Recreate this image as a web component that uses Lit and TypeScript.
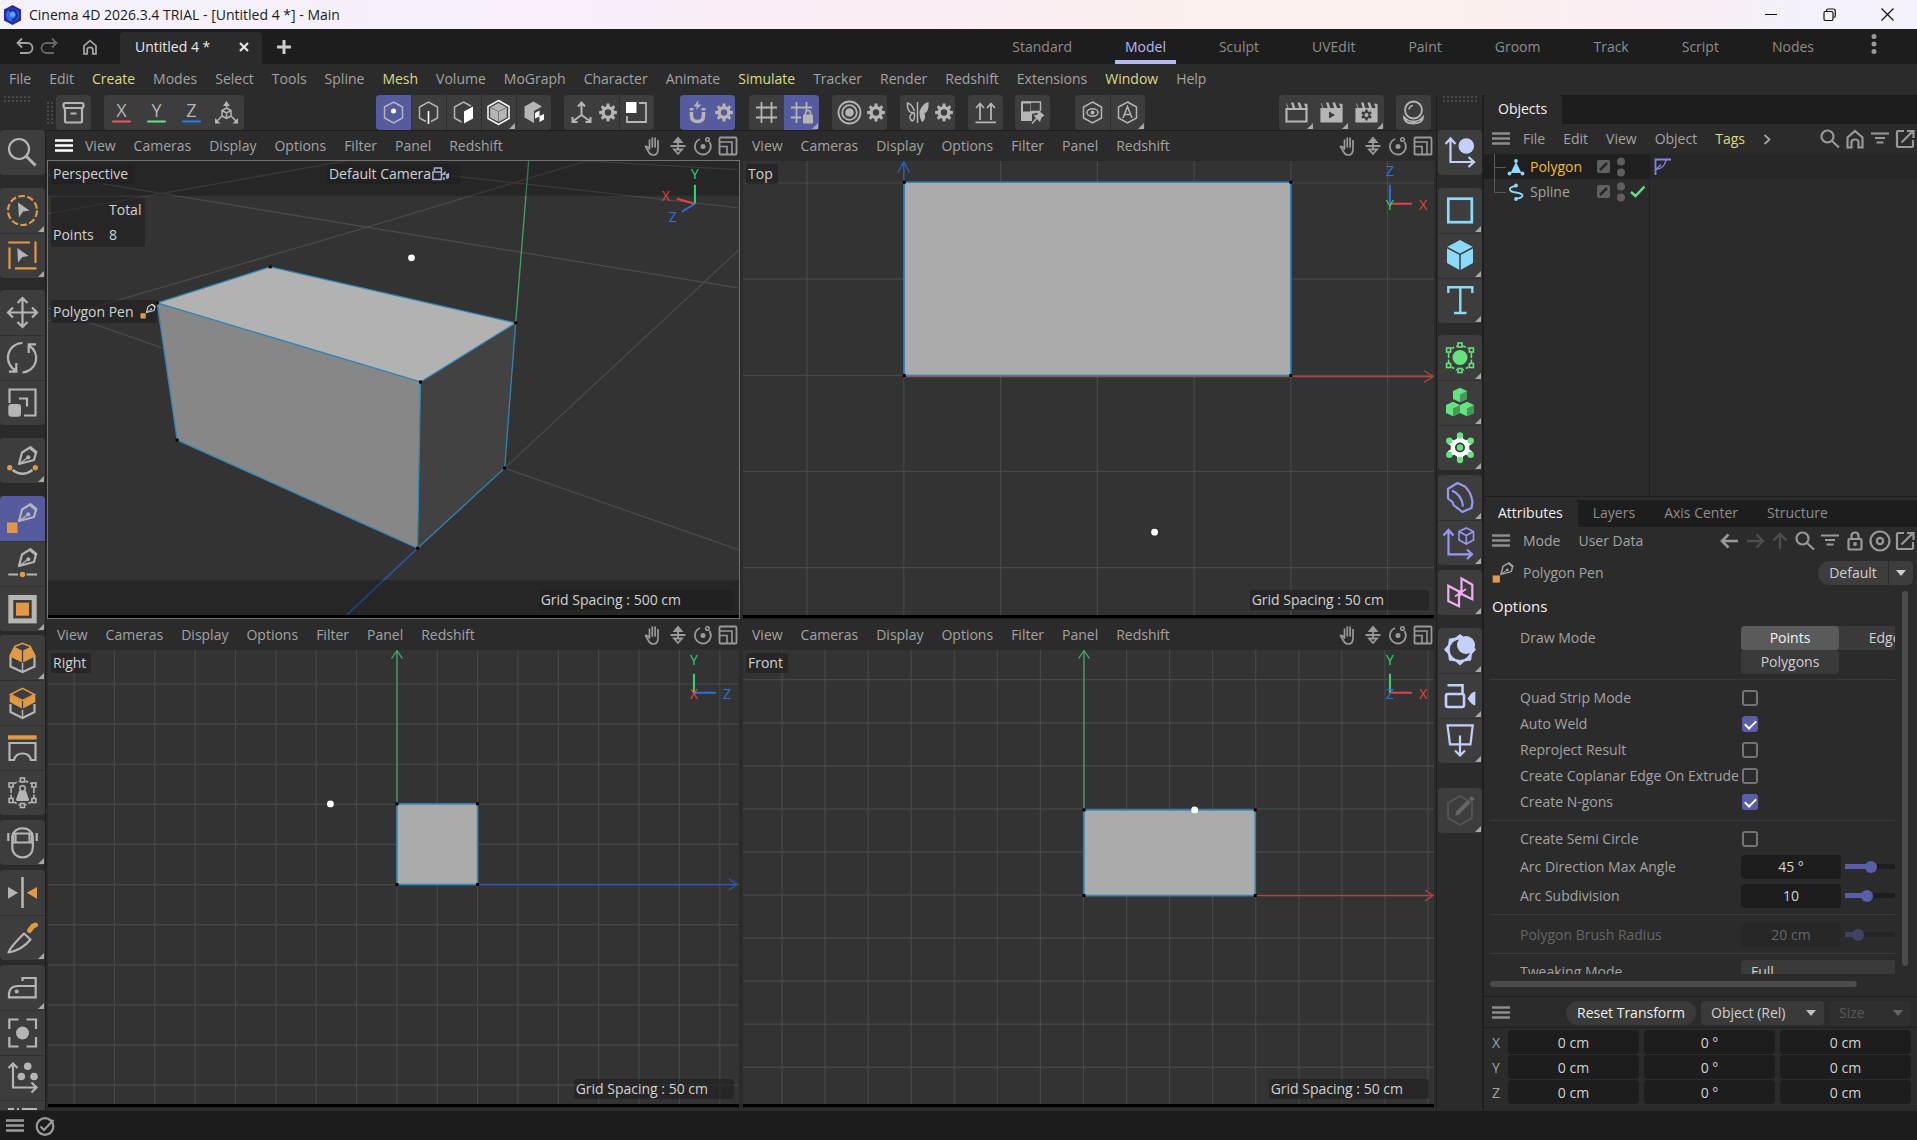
import { LitElement, html, svg, css, nothing } from "lit";
import type { TemplateResult, SVGTemplateResult } from "lit";
import { customElement, property, state } from "lit/decorators.js";
import { classMap } from "lit/directives/class-map.js";

type Icon = SVGTemplateResult;

/* ---------- icon helpers ---------- */

const icon = (size: number, body: Icon): TemplateResult =>
  html`<svg class="icon" width=${size} height=${size} viewBox="0 0 ${size} ${size}" aria-hidden="true">${body}</svg>`;

const gearPath = (cx: number, cy: number, r: number, teeth: number, hole: number): string => {
  const pts: string[] = [];
  const step = (Math.PI * 2) / teeth;
  for (let i = 0; i < teeth; i++) {
    const a = i * step - Math.PI / 2;
    for (const [o, k] of [[-0.33, 0.72], [-0.2, 1], [0.2, 1], [0.33, 0.72]]) {
      pts.push(`${(cx + Math.cos(a + o * step) * r * k).toFixed(2)} ${(cy + Math.sin(a + o * step) * r * k).toFixed(2)}`);
    }
  }
  return `M${pts.join("L")}ZM${cx - hole} ${cy}a${hole} ${hole} 0 1 0 ${hole * 2} 0a${hole} ${hole} 0 1 0 ${-hole * 2} 0Z`;
};

const gear = (cx: number, cy: number, r: number, teeth = 6, hole = r * 0.36): Icon =>
  svg`<path class="f" fill-rule="evenodd" d=${gearPath(cx, cy, r, teeth, hole)}/>`;

const nib = (dy: number): Icon => svg`<g transform="translate(0 ${dy})">
  <path d="M19 26L22 14.500L30 9.500L36 14.500L34 22Z" stroke-linejoin="round"/>
  <path d="M29.500 9L36.800 15" stroke-width="3"/>
  <path d="M19 26L28 19.500" stroke-width="1.500"/><circle class="f" cx="28.300" cy="19.300" r="2"/></g>`;

const nodes = (x: number): Icon => svg`
  <g stroke-width="1.600">${[[0, -12.5], [-11.4, -7.5], [11.4, -7.5], [-11.4, 8], [11.4, 8], [0, 13]].map(
    ([dx, dy]) => svg`<rect x=${x + dx - 2} y=${22.5 + dy - 2} width="4" height="4"/>`)}
  <path stroke-dasharray="3 2" d="M${x - 8.5} 13.500L${x - 3} 11M${x + 3} 11L${x + 8.5} 13.500M${x - 8.5} 32L${x - 3} 35M${x + 8.5} 32L${x + 3} 35"/>
  <path stroke-dasharray="5 1.500" d="M${x - 11.4} 18V28M${x + 11.4} 18V28"/></g>`;

const isoCube = (x: number, y: number): Icon => svg`
  <path class="f" d="M${x} ${y - 7.3}L${x + 7} ${y - 4}V${y + 4}L${x} ${y + 7.3}L${x - 7} ${y + 4}V${y - 4}Z"/>
  <path fill="#469857" stroke="none" d="M${x} ${y - 0.5}L${x + 7} ${y - 4}V${y + 4}L${x} ${y + 7.3}Z"/>`;

/* ---------- left palette (45 × 45) ---------- */

const I = {
  search: svg`<circle cx="19" cy="19" r="10"/><path d="M26.500 26.500L35.500 35.500" stroke-width="3"/>`,
  live: svg`<circle class="o" cx="22.500" cy="22.500" r="14.500" stroke-dasharray="6.600 2.500"/><path class="f" d="M18 14.500L29.500 22.500L23 23.500L19 29.500Z"/>`,
  rectSel: svg`<path class="o" d="M8.300 9.500H30M35.500 8.500V30M9.500 14.500V36M15 35.300H36.500"/><path class="f" d="M17.300 15L28.500 23L22.500 24L18 29.500Z"/>`,
  move: svg`<path d="M22.500 8V37M8 22.500H37M17.500 13L22.500 8L27.500 13M17.500 32L22.500 37L27.500 32M13 17.500L8 22.500L13 27.500M32 17.500L37 22.500L32 27.500"/>`,
  rotate: svg`<path d="M22.500 8A14.500 14.500 0 0 0 16 35.500M22.500 37.500A14.500 14.500 0 0 0 29 10.500M9 36.700H16.300V28M36 9.300H28.700V18"/>`,
  scale: svg`<path d="M9.500 23V9.500H35.500V35.500H24M19 18.500H27V26.500"/><rect class="f" x="8.300" y="24" width="12.700" height="12.700" rx="3"/>`,
  splinePen: svg`${nib(0)}<path d="M12.500 32Q22.500 39.500 32.500 32"/><circle class="f o" cx="9.700" cy="29.700" r="2.600"/><circle class="f o" cx="35.300" cy="29.700" r="2.600"/>`,
  polyPen: svg`${nib(-1)}<rect class="f o" x="7" y="26.500" width="10.500" height="10.500"/>`,
  linePen: svg`${nib(-1)}<path d="M8.300 33.500H18M26.500 33.500H37"/><circle class="f o" cx="22.500" cy="33.500" r="2.700"/>`,
  inset: svg`<rect x="10.800" y="11.500" width="23.400" height="23.400" stroke-width="5"/><rect class="f o" x="16" y="16.700" width="13" height="13"/>`,
  extrude: svg`<path d="M10.500 20V31.500L22.500 37L34.500 31.500V20"/><path stroke-width="1.500" d="M22.500 28V37"/><path class="f o" d="M10 19L14 11.500L21.900 15.500V27.500L10 21.500ZM35 19L31 11.500L23.100 15.500V27.500L35 21.500Z"/><path class="o" stroke-width="1.600" d="M14 11.800L22.500 8.300L31 11.800"/>`,
  bevel: svg`<path d="M10.500 24V32L22.500 38L34.500 32V24"/><path stroke-width="1.500" d="M22.500 30V38"/><path class="o" stroke-width="1.500" d="M10.500 14.500L22.500 8.300L34.500 14.500L22.500 20.500Z"/><path class="f o" d="M9.700 14.500L21.900 21V28.500L9.700 22ZM35.300 14.500L23.100 21V28.500L35.300 22Z"/>`,
  bridge: svg`<rect class="f o" x="8" y="10.300" width="28.700" height="4.200"/><path d="M9.500 18H35.500V35H31Q29.500 28.500 22.500 28.500Q15.500 28.500 14 35H9.500Z"/>`,
  weight: svg`${nodes(22.5)}<circle cx="22.500" cy="18.500" r="2.700" stroke-width="1.500"/><path class="f" d="M19 21H26L29 29.500Q29 31 27.500 31H17.500Q16 31 16 29.500Z"/>`,
  mask: svg`<rect x="12.300" y="8.300" width="20.500" height="29" rx="9.500"/><path d="M13 13.500H32V22.500H13Z"/><path d="M15.500 14V22M29.500 14V22M8.300 13V21M36.700 13V21"/>`,
  symmetry: svg`<path d="M22.500 7V38" stroke-width="2.600"/><path class="f" d="M8 17L18 22.700L8 28.700Z"/><path class="f o" d="M37 17L26.700 22.700L37 28.700Z"/>`,
  knife: svg`<path class="o" stroke-width="5" stroke-linecap="round" d="M29.500 15.500L33 11L35.500 10"/><path d="M24 18.500L30.500 24.500Q22 35 8.500 37.500Q10 32.500 24 18.500Z" stroke-linejoin="round"/>`,
  iron: svg`<path d="M22.500 16V13H35.700V32.300H9V28Q10 21 18 21H35.500"/><circle class="f" cx="16.700" cy="26.500" r="2"/>`,
  focus: svg`<path d="M9.300 19V9.500H18.500M26.500 9.500H36V19M36 27V36.500H26.500M18.500 36.500H9.300V27"/><circle class="f" cx="22.500" cy="23" r="6.500"/>`,
  axisPts: svg`<path d="M13 8.500V32.500H36.500M8.500 13L13 8.500L17.500 13M31.500 27.500L36.500 32.500L31.500 37.500"/><g class="f"><circle cx="27.700" cy="11.300" r="3.800"/><circle cx="21.300" cy="21.500" r="3.800"/><circle cx="34" cy="21.500" r="3.800"/></g>`,
  dashes: svg`<path d="M8 9H14M17 9H19M22 9H37"/>`,

  axisBall: svg`<path d="M12.500 8.500V32H36M7.500 14L12.500 8.500L17.500 14M30.500 27L36 32L30.500 37"/><circle class="f" cx="28.300" cy="16" r="7.800"/>`,
  square: svg`<rect x="10.300" y="10.700" width="23.500" height="23.500" stroke-width="2.700"/>`,
  cube: svg`<path class="f" d="M22 7L35 14V30L22 37.300L9 30V14Z"/><path stroke="#3d3d3d" stroke-width="1.500" d="M9 14.500L22 21.500L35 14.500M22 21.500V37.500"/>`,
  text: svg`<path d="M10.300 15V9.300H34.300V15M22.300 9.300V35M16 35H28.500" stroke-width="2.400"/>`,
  subdiv: svg`${nodes(22)}<circle class="f" cx="22" cy="22.500" r="7.500"/>`,
  cloner: svg`${isoCube(22, 15)}${isoCube(15, 29)}${isoCube(29, 29)}`,
  mograph: svg`<g style="color:#fff">${gear(22, 22.5, 13, 6, 5)}</g><g class="f"><circle cx="22" cy="22.500" r="3.200"/>${[[0, -12], [-10.7, -6.800], [10.7, -6.800], [-10.7, 7.200], [10.7, 7.200], [0, 12.500]].map(
    ([dx, dy]) => svg`<circle cx=${22 + dx} cy=${22.5 + dy} r="3.200"/>`)}</g>`,
  bend: svg`<path stroke-linejoin="round" d="M10 13.700L19.500 8L27 11.500Q33.500 18 34.500 27L33.500 33L24.300 37L15.500 30L14.500 27L10 23.500ZM14 15.500Q24 20 25 31.500"/>`,
  axisCube: svg`<path d="M10.500 10V34.300H34M5.500 15.500L10.500 10L15.500 15.500M29 29.500L34 34.300L29 39"/><path stroke-width="1.600" d="M28.300 8L35.500 11.500V20L28.300 24L21 20V11.500ZM21 11.500L28.300 15.500L35.500 11.500M28.300 15.500V24"/>`,
  mirror: svg`<path d="M10.300 15.700L21 21.500V36.300L10.300 31ZM23.500 8.500L34.300 14.700V29.300L23.500 24Z"/><path stroke-width="1.600" d="M17 26.500L28 19M22.300 20V26"/>`,
  light: svg`<path class="f" d="M22 6L26.500 9.500L33 10.700L34 17L38 21.500L34 26L33 32.500L26.500 33.500L22 37.500L17.500 33.500L11 32.500L10 26L6 21.500L10 17L11 10.700L17.500 9.500Z"/><circle cx="22" cy="21.700" r="10.300" fill="#3d3d3d" stroke="none"/><circle class="f" cx="28" cy="17" r="9"/>`,
  camera: svg`<rect x="8" y="21" width="18" height="13" rx="2" stroke-width="2.600"/><path d="M9.500 12.300H24.500V21" stroke-width="2.600"/><path class="f" d="M29.500 25.500Q34 18.500 37.300 18.500V32.500Q34 32.500 29.500 25.500Z"/>`,
  target: svg`<path d="M9.500 7.300H34.700L32.500 26.300H12ZM22 17.500V37M17 32.500L22 37.500L27 32.500"/>`,
  edit: svg`<path stroke-width="1.700" d="M22 8L34 15V30L22 37L10 30V15Z" opacity=".6"/><path stroke-width="4" d="M19.500 25L31 13.500M32.500 12L35 9.500"/><path class="f" d="M17 28L19 22.500L22.500 26Z"/>`,
};

/* ---------- top toolbar (35 × 35) ---------- */

const HEX = "M17.500 7L26.500 12V23L17.500 28L8.500 23V12Z";
const AXES = svg`<path stroke-width="2" d="M17.500 8V20L8.500 26.500M17.500 20L26.500 26.500M14 11.500L17.500 7.500L21 11.500M8.500 22V27H13.500M26.500 22V27H21.500"/>`;
const clap = (inner: Icon | typeof nothing, solid: boolean): Icon => svg`
  <path class="f" d="M7 8.500L9 14H28.500V9L25 8.500L27 14H23.500L21 7.500H18.500L20.500 14H16.500L14.500 7.500H12L14 14H10L7.500 8Z"/>
  <path d="M7.500 14V26.500H27.500V14Z" fill=${solid ? "currentColor" : "none"}/>${inner}`;

const letter = (ch: string, color: string): Icon => svg`<text class="axis-letter" x="17.500" y="22" text-anchor="middle">${ch}</text><rect x="8" y="25.500" width="19" height="2" rx="1" fill=${color} stroke="none"/>`;

const T = {
  archive: svg`<rect x="7.500" y="8" width="20" height="5" rx="2"/><path d="M9 13V26Q9 27.500 10.500 27.500H24.500Q26 27.500 26 26V13M14.500 18.500H20.500"/>`,
  x: letter("X", "#ec5a5a"),
  y: letter("Y", "#5fe87e"),
  z: letter("Z", "#1e84ee"),
  world: svg`<path stroke-width="1.500" d="M17.500 13L22 15.500V21L17.500 23.500L13 21V15.500ZM13 15.500L17.500 18L22 15.500M17.500 18V23.500M17.500 13V7.500M13 21L7.500 26.500M22 21L27.500 26.500"/><path class="f" d="M17.500 6L21 11H14ZM6 28.500V23L11.500 28.500ZM29 28.500V23L23.500 28.500Z"/>`,
  point: svg`<path stroke-width="1.500" d=${HEX}/><circle fill="#fff" stroke="none" cx="17.500" cy="16" r="2.500"/>`,
  edge: svg`<path stroke-width="1.500" d="M15 26.500L8.500 23V12L17.500 7L26.500 12V23L20 26.500"/><path stroke="#fff" stroke-width="1.600" d="M17.500 16V29"/>`,
  poly: svg`<path stroke-width="1.500" d="M15.500 27L8.500 23V12L17.500 7L25 11"/><path fill="#fff" stroke="none" d="M18 16.500L27 11.500V23.500L18 28.500Z"/>`,
  model: svg`<path stroke="#fff" stroke-width="1.500" d="M17.500 5.500L28 11.500V23.500L17.500 29.500L7 23.500V11.500Z"/><path class="f" d="M17.500 8L25.800 12.500V22.500L17.500 27L9.200 22.500V12.500Z"/><path stroke="#777" stroke-width="1" d="M9.500 12.500L17.500 16.500L25.500 12.500M17.500 16.500V27"/>`,
  texture: svg`<path class="f" d="M17.500 6.500L26 11.500L18 16V28L8.500 22.500V11.500Z"/><path fill="#fff" stroke="none" d="M19 18L23.500 15.500V21L28 19V24.500L23.500 27V21.500L19 23.500Z"/>`,
  axis: AXES,
  gear: gear(9, 17.5, 9, 8, 3.2),
  corner: svg`<rect fill="#fff" stroke="none" x="7" y="7" width="10.500" height="11"/><path stroke-width="1.800" d="M20 8H27V27H8V21"/>`,
  magnet: svg`<path stroke-width="3.600" d="M11.500 17V20.500Q11.500 26.500 17.500 26.500Q23.500 26.500 23.500 20.500V17"/><path class="f" d="M9.700 13H13.500V15.500H9.700ZM21.500 13H25.500V15.500H21.500ZM18.500 5L13.500 11.500H17L16 15L21.500 9.500H18Z"/>`,
  grid: svg`<path stroke-width="1.800" d="M12.500 7V28M22.500 7V28M7 12.500H28M7 22.500H28"/>`,
  gridLock: svg`<path stroke-width="1.800" d="M12.500 7V28M22.500 7V15M7 12.500H28M7 22.500H17"/><rect class="f" x="19" y="19.500" width="10" height="9" rx="1"/><path stroke-width="1.600" d="M21.500 20V18Q21.500 15.500 24 15.500Q26.500 15.500 26.500 18V20"/>`,
  falloff: svg`<circle cx="17.500" cy="17.500" r="11" stroke-width="1.800"/><circle cx="17.500" cy="17.500" r="7.300" stroke-width="1.800"/><circle class="f" cx="17.500" cy="17.500" r="4.300"/>`,
  butterfly: svg`<path stroke-width="1.500" d="M17.500 7V28M14.500 16Q12 9 7.500 8Q7 14 9.500 16.500Q11 18 14.500 17.500Q9.500 19 10 23Q11 26 12.500 26Q15 24 14.500 18"/><path class="f" d="M19.500 16.500Q22.500 8 28.500 7Q29 15 26 17.500Q24.500 18 24.500 18.500Q26.500 24 22.500 27Q19.500 25 19.500 16.500Z"/>`,
  arrows: svg`<path stroke-width="1.800" d="M12 9V25M23 9V25M8 13L12 8.500L16 13M19 13L23 8.500L27 13M7.500 27.300H28"/>`,
  checker: svg`<path class="f" d="M6 6.500H16V16.500H25.500V17L17 19V26H6Z"/><path stroke-width="1.500" d="M7 7H25.500V16M16 16.500H25"/><rect fill="#3d3d3d" stroke="none" x="8" y="8.500" width="7.500" height="8"/><path class="f" stroke="#3d3d3d" d="M23.500 15.500L29.500 20.500L26.500 22.500L25 27L18.500 20.500L22.500 19.500Z"/><path stroke-width="1.500" d="M21.500 23.500L17 28.500"/>`,
  hexEye: svg`<path stroke-width="1.500" d=${HEX}/><ellipse cx="17.500" cy="17.500" rx="5.500" ry="3.800" stroke-width="1.500"/><circle class="f" cx="17.500" cy="17.500" r="2"/>`,
  hexA: svg`<path stroke-width="1.500" d=${HEX}/><path stroke-width="1.500" d="M13 23L17.500 11.500L22 23M14.500 19.500H20.500"/>`,
  clapView: clap(nothing, false),
  clapPlay: clap(svg`<path fill="#3d3d3d" stroke="none" d="M15 16.500L21 20L15 23.500Z"/>`, true),
  clapSet: clap(svg`<g style="color:#3d3d3d">${gear(17.500, 20, 5.5)}</g>`, true),
  sphere: svg`<circle cx="17.500" cy="15" r="8.500" stroke-width="1.800"/><path stroke-width="1.500" d="M13 14.500Q13.500 11 17 10.500"/><path stroke-width="1.800" d="M8 22Q8 28.500 17.500 28.500Q27 28.500 27 22Q23 26.500 17.500 26.500Q12 26.500 8 22Z"/>`,
};

/* ---------- small icons (24 × 24) ---------- */

const S = {
  hand: svg`<path stroke-width="1.700" stroke-linecap="round" stroke-linejoin="round" d="M8.500 14V6M11.300 13V4M14.100 13V4M17 13V6.500V14.500Q17 21 12.500 21Q9.500 21 8 18.500L4.500 12.500Q6 11.500 8.500 15"/>`,
  updown: svg`<path class="f" d="M12 2.500L17.500 9H6.500Z"/><path d="M12 8V16M4.500 12H19.500" stroke-width="1.800"/><path d="M8 15.500H16L12 20Z" stroke-width="1.800"/>`,
  orbit: svg`<path d="M9 5A8 8 0 1 0 18.500 8" stroke-width="1.800"/><circle class="f" cx="12" cy="12.500" r="2.500"/><circle cx="16.500" cy="5.500" r="1.800" stroke-width="1.500"/>`,
  maxi: svg`<rect x="3.500" y="3.500" width="17" height="17" rx="1" stroke-width="1.800"/><path d="M3.500 8H16V20.500M3.500 12.500H11V20.500" stroke-width="1.600"/>`,
  menu: svg`<path d="M3 6.500H21M3 11.500H21M3 16.500H21" stroke-width="2.400"/>`,
  search: svg`<circle cx="9.500" cy="9.500" r="6"/><path d="M14 14L21 20.500"/>`,
  home: svg`<path d="M4.500 20.500V10.500L12 4L19.500 10.500V20.500H15.500V15Q15.500 12.500 12 12.500Q8.500 12.500 8.500 15V20.500Z"/>`,
  filter: svg`<path d="M3 6.500H21M7 11H17M8.500 15.500H15.500"/>`,
  popout: svg`<path d="M11 4H5Q4 4 4 5V19Q4 20 5 20H19Q20 20 20 19V13M8.500 15.500L19.500 4.500M14 4H20.500V11"/>`,
  back: svg`<path d="M20 12H4M10.500 5.500L4 12L10.500 18.500" stroke-width="2.600"/>`,
  fwd: svg`<path d="M4 12H20M13.500 5.500L20 12L13.500 18.500" stroke-width="2.400"/>`,
  up: svg`<path d="M12 20V5M5.500 11.500L12 5L18.500 11.500" stroke-width="2.400"/>`,
  lock: svg`<rect x="5.500" y="10" width="13" height="10.500" rx="1"/><path d="M8.500 10V7Q8.500 3.500 12 3.500Q15.500 3.500 15.500 7V10"/><circle class="f" cx="12" cy="15" r="2"/>`,
  ring: svg`<circle cx="12" cy="12" r="9.500"/><circle cx="12" cy="12" r="3.200"/>`,
  check: svg`<circle cx="12" cy="12.500" r="8.300"/><path d="M7.500 12.500L11 16L20.500 6"/>`,
  undo: svg`<path d="M5 8H14.500A5 5 0 0 1 14.500 18H7M9 3.500L4.500 8L9 12.500" stroke-width="1.800"/>`,
  redo: svg`<path d="M19 8H9.500A5 5 0 0 0 9.500 18H17M15 3.500L19.500 8L15 12.500" stroke-width="1.800"/>`,
};

const shared = css`
  * { box-sizing: border-box; }
  button, input, select { font: inherit; color: inherit; border: 0; margin: 0; padding: 0; background: none; border-radius: 0; }
  a { color: inherit; text-decoration: none; }
  .icon { display: block; flex: none; fill: none; stroke: currentColor; stroke-width: 2.2; }
  .f { fill: currentColor; stroke: none; }
  .o { color: #e09a45; }
`;

/* ---------- viewport ---------- */

interface Scene {
  name: string;
  art: Icon;
  spacing: string;
  pad: number;
  perspective?: boolean;
  x0: number;
}

const gridLines = (x0: number, dx: number, y0: number, dy: number): Icon => {
  const v: Icon[] = [];
  for (let x = x0; x < 692; x += dx) v.push(svg`<path d="M${x.toFixed(1)} 0V454"/>`);
  for (let y = y0; y < 454; y += dy) v.push(svg`<path d="M0 ${y.toFixed(1)}H692"/>`);
  return svg`<g stroke="#484848" stroke-width="1.200">${v}</g>`;
};

const dots = (pts: number[][]): Icon =>
  svg`${pts.map(([x, y]) => svg`<rect x=${x - 1.5} y=${y - 1.5} width="3" height="3" fill="#000"/>`)}`;

const RED = "#e04545", GREEN = "#2fd671", BLUE = "#2f6fe0";

const gizmo = (up: string, upColor: string, rightCh: string, rightColor: string, mid: string, midColor: string): Icon => svg`
  <g stroke-width="2"><path stroke=${upColor} d="M646 24V43"/><path stroke=${rightColor} d="M646 43H668"/></g>
  <text class="gz" x="646" y="15" fill=${upColor}>${up}</text>
  <text class="gz" x="679" y="49" fill=${rightColor}>${rightCh}</text>
  <text class="gz" x="646" y="49" fill=${midColor}>${mid}</text>`;

const boxArt = (x: number, y: number, w: number, h: number): Icon => svg`
  <rect x=${x} y=${y} width=${w} height=${h} fill="#ababab" stroke="#2f86b8" stroke-width="1.600"/>
  ${dots([[x, y], [x + w, y], [x, y + h], [x + w, y + h]])}`;

const cursor = (x: number, y: number): Icon => svg`<circle cx=${x} cy=${y} r="3.400" fill="#fff"/>`;

const scenes: Record<string, Scene> = {
  persp: {
    name: "Perspective", spacing: "500 cm", pad: 53, perspective: true, x0: 1,
    art: svg`
      <g stroke="#4c4c4c" stroke-width="1.200" fill="none">
        <path d="M0 14L690 127M0 53L300 0M0 160L318 67L463 23L540 0M0 147L115 187M340 8L690 47M530 0L690 9M457 307L692 88M457 307L692 389"/>
      </g>
      <path stroke="#3da765" stroke-width="1.300" d="M481 0L468 162"/>
      <path stroke="#2a58b0" stroke-width="1.500" d="M370 387L299 454"/>
      <g fill="#000" opacity=".24"><rect width="692" height="35"/><rect y="419" width="692" height="35"/></g>
      <path fill="#b2b2b2" d="M223 106L468 162L373 221L110 142Z"/>
      <path fill="#878787" d="M110 142L373 221L370 387L130 279Z"/>
      <path fill="#424242" d="M373 221L468 162L457 307L370 387Z"/>
      <path stroke="#2f86b8" stroke-width="1.300" fill="none" stroke-linejoin="round" d="M110 142L223 106L468 162L457 307L370 387L130 279ZL373 221L468 162M373 221L370 387"/>
      ${dots([[223, 106], [468, 162], [373, 221], [110, 142], [130, 279], [370, 387], [457, 307]])}
      ${cursor(364, 97)}
      <g stroke-width="2"><path stroke=${GREEN} d="M647 24V43"/><path stroke=${RED} d="M629 38L647 43"/><path stroke=${BLUE} d="M634 51L647 43"/></g>
      <text class="gz" x="647" y="18" fill=${GREEN}>Y</text><text class="gz" x="618" y="40" fill=${RED}>X</text><text class="gz" x="625" y="61" fill=${BLUE}>Z</text>`,
  },
  top: {
    name: "Top", spacing: "50 cm", pad: 45, x0: 0,
    art: svg`${gridLines(64, 96.6, 22.3, 96)}
      <g fill="none" stroke-width="1.300"><path stroke="#2760b8" d="M160.500 215V1M154.500 12L160.500 1L166.500 12"/><path stroke="#b04444" d="M160.500 215.500H689M680 209.500L689 215.500L680 221.500"/></g>
      ${boxArt(161, 21.500, 386, 193)}${cursor(411, 371)}
      ${gizmo("Z", BLUE, "X", RED, "Y", GREEN)}`,
  },
  right: {
    name: "Right", spacing: "50 cm", pad: 26, x0: 1,
    art: svg`${gridLines(27, 40.3, 34.3, 40.05)}
      <g fill="none" stroke-width="1.300"><path stroke="#3da765" d="M349.500 234V1M344 9L349.500 1L355 9"/><path stroke="#2a58b0" d="M349.500 234.500H689M681 229L689 234.500L681 240"/></g>
      ${boxArt(349.500, 154, 80.500, 80.500)}${cursor(283, 154)}
      ${gizmo("Y", GREEN, "Z", BLUE, "X", RED)}`,
  },
  front: {
    name: "Front", spacing: "50 cm", pad: 26, x0: 0,
    art: svg`${gridLines(39, 43, 30, 43)}
      <g fill="none" stroke-width="1.300"><path stroke="#3da765" d="M340.500 245V1M335 9L340.500 1L346 9"/><path stroke="#b04444" d="M340.500 245.500H689M681 240L689 245.500L681 251"/></g>
      ${boxArt(340.500, 160, 171, 85.500)}${cursor(451, 160)}
      ${gizmo("Y", GREEN, "X", RED, "Z", BLUE)}`,
  },
};

@customElement("scene-view")
export class SceneView extends LitElement {
  @property() kind = "persp";
  @property({ type: Boolean }) active = false;

  static styles = [shared, css`
    :host { display: flex; flex-direction: column; min-width: 0; min-height: 0; padding: 0 1px 1px; background: #2b2b2b; }
    .bar { display: flex; align-items: center; height: 29px; padding: 0 0 0 10px; color: #a3a3a3; }
    .burger { color: #fff; margin: 0 9px 0 -5px; }
    .menus { display: flex; gap: 18px; flex: 1; line-height: 26px; height: 29px; }
    .nav { display: flex; gap: 1px; color: #9a9a9a; }
    .canvas { position: relative; flex: 1; min-height: 0; border: 1px solid #2b2b2b; border-bottom-color: #1f1f1f; background: #000; padding-bottom: 3px; }
    .canvas.active { border-color: #727272; }
    .art { display: block; width: 100%; height: 100%; background: #333; }
    .gz { font-size: 14px; text-anchor: middle; }
    .tag { position: absolute; background: rgba(30, 30, 30, 0.62); color: #d2d2d2; border-radius: 2px; line-height: 20px; padding: 0 5px 0 2px; white-space: nowrap; }
    .name { left: 3px; top: 3px; }
    .cam { left: 50%; top: 3px; transform: translateX(-50%); display: flex; align-items: center; padding-right: 11px; }
    .stats { left: 3px; top: 36px; display: grid; grid-template-columns: 56px 36px; line-height: 25px; padding-right: 0; }
    .tool { left: 3px; top: 139px; line-height: 23px; display: flex; align-items: center; gap: 6px; padding-right: 1px; }
    .spacing { right: 5px; bottom: 8px; }
    .lav { color: #a9b0cf; }
  `];

  render() {
    const s = scenes[this.kind];
    return html`
      <div class="bar">
        ${this.active ? html`<button class="burger" aria-label="Menu">${icon(24, S.menu)}</button>` : nothing}
        <div class="menus">${["View", "Cameras", "Display", "Options", "Filter", "Panel", "Redshift"].map((m) => html`<button>${m}</button>`)}</div>
        <div class="nav">
          <button aria-label="Pan">${icon(24, S.hand)}</button><button aria-label="Zoom">${icon(24, S.updown)}</button>
          <button aria-label="Orbit">${icon(24, S.orbit)}</button><button aria-label="Maximize">${icon(24, S.maxi)}</button>
        </div>
      </div>
      <div class=${classMap({ canvas: true, active: this.active })}>
        <svg class="art" viewBox="${s.x0} 0 690 454" preserveAspectRatio="xMidYMid slice" role="img" aria-label=${s.name}>${s.art}</svg>
        <span class="tag name">${s.name}</span>
        ${s.perspective ? html`
          <span class="tag cam">Default Camera <svg class="icon lav" width="18" height="16" viewBox="0 0 18 16"><path stroke-width="1.500" d="M3 5V2H10V5M1.500 6H10V13.500H1.500ZM11 9L13.500 6.500V9"/><path stroke-width="1.500" d="M12.500 14V11M15.500 13V8M17 7V12"/></svg></span>
          <span class="tag stats"><span></span><span>Total</span><span>Points</span><span>8</span></span>
          <span class="tag tool">Polygon Pen <svg class="icon" width="16" height="16" viewBox="6 8 32 32">${I.polyPen}</svg></span>` : nothing}
        <span class="tag spacing" style="padding-right:${s.pad}px">Grid Spacing : ${s.spacing}</span>
      </div>`;
  }
}

/* ---------- application ---------- */

type Tool = [string, Icon, string?];

const leftGroups: { gap: number; tools: Tool[] }[] = [
  { gap: 13, tools: [["Search", I.search]] },
  { gap: 12, tools: [["Live Selection", I.live, "m"], ["Rectangle Selection", I.rectSel, "m"]] },
  { gap: 13, tools: [["Move", I.move], ["Rotate", I.rotate], ["Scale", I.scale]] },
  { gap: 13, tools: [["Spline Pen", I.splinePen, "m"]] },
  { gap: 4, tools: [["Polygon Pen", I.polyPen, "on"], ["Line Cut", I.linePen], ["Inset", I.inset, "m"]] },
  { gap: 5, tools: [["Extrude", I.extrude, "m"], ["Bevel", I.bevel], ["Bridge", I.bridge], ["Weight", I.weight]] },
  { gap: 5, tools: [["Weld", I.mask, "m"]] },
  { gap: 5, tools: [["Symmetry", I.symmetry], ["Knife", I.knife, "m"]] },
  { gap: 0, tools: [["Iron", I.iron, "m"], ["Focus", I.focus], ["Axis", I.axisPts], ["More", I.dashes]] },
];

const rightGroups: { gap: number; tools: Tool[] }[] = [
  { gap: 13, tools: [["Null", I.axisBall, "lav"]] },
  { gap: 12, tools: [["Rectangle", I.square, "m sky"], ["Cube", I.cube, "m sky"], ["Text", I.text, "m sky"]] },
  { gap: 5, tools: [["Subdivision", I.subdiv, "m green"], ["Cloner", I.cloner, "m green"], ["MoGraph", I.mograph, "m green"]] },
  { gap: 5, tools: [["Bend", I.bend, "m violet"], ["Axis Deformer", I.axisCube, "m violet"]] },
  { gap: 13, tools: [["Instance", I.mirror, "m pink"]] },
  { gap: 25, tools: [["Light", I.light, "m lav"], ["Camera", I.camera, "m lav"], ["Target", I.target, "m lav"]] },
  { gap: 0, tools: [["Edit", I.edit, "m dim"]] },
];

const topGroups: { gap: number; tools: Tool[] }[] = [
  { gap: 13, tools: [["Asset Browser", T.archive]] },
  { gap: 132, tools: [["Lock X", T.x], ["Lock Y", T.y], ["Lock Z", T.z], ["Coordinates", T.world]] },
  { gap: 13, tools: [["Points Mode", T.point, "on"], ["Edges Mode", T.edge, "sep"], ["Polygons Mode", T.poly, "sep"], ["Model Mode", T.model, "m sep"], ["Texture Mode", T.texture, "sep"]] },
  { gap: 26, tools: [["Axis", T.axis], ["Axis Settings", T.gear, "thin"], ["Workplane", T.corner, "sep"]] },
  { gap: 14, tools: [["Snap", T.magnet, "on"], ["Snap Settings", T.gear, "on thin"]] },
  { gap: 13, tools: [["Grid", T.grid], ["Lock Grid", T.gridLock, "on m"]] },
  { gap: 13, tools: [["Soft Selection", T.falloff], ["Soft Selection Settings", T.gear, "thin"]] },
  { gap: 13, tools: [["Symmetry", T.butterfly], ["Symmetry Settings", T.gear, "thin"]] },
  { gap: 12, tools: [["Normals", T.arrows]] },
  { gap: 25, tools: [["Visibility", T.checker]] },
  { gap: 0, tools: [["Solo", T.hexEye], ["Auto Solo", T.hexA, "m sep"]] },
];

const topEnd: { gap: number; tools: Tool[] }[] = [
  { gap: 12, tools: [["Render View", T.clapView, "m"], ["Render", T.clapPlay, "m"], ["Render Settings", T.clapSet, "m"]] },
  { gap: 1, tools: [["Material", T.sphere]] },
];

const options1: [string, boolean][] = [
  ["Quad Strip Mode", false], ["Auto Weld", true], ["Reproject Result", false],
  ["Create Coplanar Edge On Extrude", false], ["Create N-gons", true],
];

@customElement("app-root")
export class AppRoot extends LitElement {
  @state() private drawMode = "Points";

  static styles = [shared, css`
    :host { display: block; font-family: "Open Sans", "Noto Sans", sans-serif; font-size: 14px; line-height: 20px; color: #a3a3a3; background: #2b2b2b; }
    .app { display: grid; grid-template-rows: 29px 35px 31px minmax(0, 1fr) 30px; height: 100vh; overflow: hidden; }

    .title { display: flex; align-items: center; gap: 7px; padding-left: 3px; color: #1a1a1a; background: linear-gradient(90deg, #f5f1fa 0%, #f8effa 30%, #fbedf5 50%, #faf0ed 62%, #faf0ed 76%, #faeef5 87%, #f4f1fa 94%); }
    .title h1 { font-size: 14px; font-weight: 400; margin: 0; flex: 1; }
    .winbtns { display: flex; padding-right: 1px; }
    .winbtns button { width: 58px; height: 29px; display: grid; place-items: center; }

    .docbar { display: flex; align-items: stretch; background: #1d1d1d; }
    .history { display: flex; align-items: center; width: 120px; padding-left: 13px; }
    .history button:nth-child(2) { color: #666; }
    .history button:nth-child(3) { margin-left: 17px; }
    .doctab { display: flex; align-items: center; gap: 28px; margin-top: 3px; padding: 0 12px 2px 15px; background: #2b2b2b; color: #e8e8e8; border-radius: 4px 4px 0 0; }
    .plus { width: 43px; }
    .plus svg { margin: 0 auto; color: #ccc; }
    .spaces { display: flex; margin-left: auto; padding-right: 34px; color: #8d8d8d; }
    .spaces button { margin: 0 17px 0 16px; padding: 0 10px; }
    .spaces .sel { color: #b6b8f6; box-shadow: inset 0 -4px #b6b8f6; }
    .spaces .dots { margin: 0; padding: 0; width: 42px; }
    .dots svg { margin-left: 24px; }

    .menubar { display: flex; align-items: center; gap: 18px; padding: 0 0 2px 9px; }
    .hot { color: #d9dd84; }

    .main { display: grid; grid-template-columns: minmax(0, 1fr) 47px 434px; min-height: 0; }
    .work { display: grid; grid-template-rows: 36px minmax(0, 1fr); min-height: 0; }
    .toolbar { display: flex; align-items: flex-start; padding: 0 4px 0 3px; }
    .grip { background-image: radial-gradient(circle, #4a4a4a 1px, transparent 1px); background-size: 4px 4px; }
    .grip.h { width: 28px; height: 8px; margin-right: 15px; }
    .grip.v { width: 8px; height: 24px; margin: 6px 2px 0 0; }
    .fill { flex: 1; }
    .bgroup { display: flex; background: #3d3d3d; border-radius: 4px; overflow: hidden; flex: none; }
    .tb { position: relative; height: 35px; width: 35px; color: #b5b5b5; overflow: hidden; }
    .tb.thin { width: 20px; }
    .sep { box-shadow: inset 1px 0 #2f2f2f; }
    .on { background: #565a9e; }
    .m::after { content: ""; position: absolute; right: 1px; bottom: 1px; border-style: solid; border-width: 0 0 6px 6px; border-color: transparent transparent #a8a8a8; }
    .axis-letter { font-size: 18px; fill: #b5b5b5; stroke: none; }

    .body { display: grid; grid-template-columns: 46px minmax(0, 1fr); min-height: 0; }
    .tools { display: flex; flex-direction: column; overflow: hidden; border-right: 1px solid #1e1e1e; margin-top: -1px; }
    .vgroup { flex: none; background: #3d3d3d; border-radius: 4px; overflow: hidden; }
    .tool { position: relative; display: block; width: 45px; height: 45px; color: #b5b5b5; }
    .tool + .tool { box-shadow: inset 0 1px #313131; }
    .views { display: grid; grid-template: repeat(2, minmax(0, 1fr)) / repeat(2, minmax(0, 1fr)); min-height: 0; padding-bottom: 1px; border-top: 1px solid #1e1e1e; margin-top: -1px; }

    .create { border: solid #1e1e1e; border-width: 0 1px; padding-left: 1px; overflow: hidden; }
    .create .grip { width: 36px; height: 8px; margin: 0 0 27px 4px; }
    .create .tool { width: 44px; }
    .sky { color: #8bdafc; } .green { color: #66e37f; } .violet { color: #9796fb; } .pink { color: #f3adf5; } .lav { color: #c5d0fa; }
    .create .sky { color: #8bdafc; } .create .green { color: #66e37f; } .create .violet { color: #9796fb; }
    .create .pink { color: #f3adf5; } .create .lav { color: #c5d0fa; } .create .dim { color: #666; }

    .side { display: grid; grid-template-rows: minmax(0, 401px) minmax(0, 1fr) auto; min-height: 0; border-left: 1px solid #1e1e1e; }
    .panel { display: flex; flex-direction: column; min-height: 0; min-width: 0; }
    .tabs { display: flex; background: #1d1d1d; height: 29px; flex: none; color: #8d8d8d; }
    .tabs button { padding: 0 14px 1px 15px; }
    .tabs .sel { background: #2b2b2b; color: #f0f0f0; border-radius: 4px 4px 0 0; padding: 0 15px 1px 14px; }
    .pmenu { display: flex; align-items: center; gap: 18px; height: 30px; flex: none; padding: 0 0 1px 5px; }
    .pmenu .first { margin-right: -8px; color: #8c8c8c; }
    .picons { display: flex; gap: 1px; margin-left: auto; color: #999; }
    .faint { color: #4d4d4d; }

    .tree { flex: 1; display: grid; grid-template-columns: 166px 1fr; grid-template-rows: 25px 25px 1fr; }
    .node { display: flex; align-items: center; padding-left: 10px; border-right: 1px solid #1f1f1f; }
    .node .nm { width: 67px; margin-left: 4px; }
    .picked { background: #1f1f1f; color: #f5bd2a; }
    .pickrow { background: #272727; display: flex; align-items: center; padding-left: 4px; }

    .attr { border-top: 1px solid #1e1e1e; padding-top: 3px; }
    .attr .tabs { height: 27px; }
    .attr .pmenu { height: 28px; }
    .toolname { display: flex; align-items: center; height: 36px; padding: 0 4px 0 8px; gap: 9px; flex: none; }
    .preset { display: flex; margin-left: auto; height: 24px; background: #3d3d3d; border-radius: 12px 5px 5px 12px; color: #cfcfcf; }
    .preset button:first-child { width: 71px; border-right: 1px solid #2b2b2b; }
    .preset button:last-child { width: 24px; display: grid; place-items: center; }
    .scroller { display: grid; grid-template-columns: minmax(0, 1fr) 22px; grid-template-rows: minmax(0, 1fr) 22px; flex: 1; min-height: 0; padding-left: 6px; }
    .form { overflow: hidden; }
    .form h2 { margin: 0; padding: 2px 0 0 2px; font-size: 15px; line-height: 26px; font-weight: 400; color: #f4f4f4; }
    .row { display: flex; align-items: center; height: 26px; padding-left: 30px; white-space: nowrap; }
    .row > label, .row > .lab { width: 221px; flex: none; }
    .row.tall { height: 29px; }
    .row.mode { height: 60px; align-items: flex-start; padding-top: 7px; line-height: 24px; }
    .sect { border-top: 1px solid #393939; padding: 5px 0; }
    .sect.tight { padding: 5px 0 4px; }
    .off { color: #666; }
    .seg { display: grid; grid-template-columns: 98px 98px; background: linear-gradient(#3a3a3a, #3a3a3a) 0 0 / 100% 24px no-repeat; border-radius: 4px; }
    .seg button { height: 24px; background: #3a3a3a; color: #cfcfcf; border-radius: 4px; }
    .seg .sel { background: #5a5a5a; color: #f4f4f4; }
    .cb { appearance: none; width: 16px; height: 16px; margin-left: 1px; border: 2px solid #747474; border-radius: 3px; display: grid; place-items: center; }
    .cb:checked { background: #5a5ea8; border-color: #5a5ea8; }
    .cb:checked::before { content: ""; width: 9px; height: 5px; border: solid #fff; border-width: 0 0 2px 2px; transform: translateY(-1px) rotate(-45deg); }
    .num { width: 100px; height: 24px; background: #1d1d1d; color: #d4d4d4; text-align: center; border-radius: 4px; flex: none; }
    .off .num { background: #272727; color: #666; }
    .rng { appearance: none; width: 100px; height: 12px; margin-left: 4px; flex: none; background: linear-gradient(90deg, #5a5ea8 var(--p), #1d1d1d var(--p)) 0 center / 100% 5px no-repeat; border-radius: 3px; }
    .rng::-webkit-slider-thumb { appearance: none; width: 12px; height: 12px; border-radius: 6px; background: #5a5ea8; }
    .off .rng { opacity: 0.45; }
    .pick { appearance: none; background: #3a3a3a; color: #cfcfcf; border-radius: 4px; height: 24px; padding: 0 10px; width: 100%; display: block; }
    .combo { position: relative; }
    .combo svg { position: absolute; right: 8px; top: 9px; pointer-events: none; color: #c0c0c0; }
    .wide { width: 200px; flex: none; }
    .vbar { width: 6px; margin: 0 0 8px 7px; border-radius: 3px; background: #4c4c4c; }
    .hbar { height: 6px; margin: 7px 38px 0 0; border-radius: 3px; background: #4c4c4c; }

    .coords { border-top: 1px solid #1e1e1e; padding-bottom: 5px; }
    .chead { display: flex; align-items: center; gap: 5px; height: 31px; padding: 1px 6px 0 5px; border-bottom: 1px solid #1e1e1e; margin-bottom: 2px; color: #8c8c8c; }
    .reset { margin-left: auto; width: 130px; height: 24px; background: #3a3a3a; border-radius: 12px; color: #f0f0f0; }
    .c1 { width: 123px; } .c2 { width: 82px; opacity: 0.4; }
    .ctable { width: 100%; border-collapse: separate; border-spacing: 5px 0; padding-right: 1px; table-layout: fixed; }
    .ctable th { width: 14px; font-weight: 400; text-align: left; padding: 0 0 0 3px; }
    .ctable td { padding: 0 0 1px; }
    .ctable .num { width: 100%; display: block; }

    .status { display: flex; align-items: center; gap: 6px; padding: 1px 0 0 3px; background: #1c1c1c; color: #9a9a9a; border-top: 1px solid #2b2b2b; }
  `];

  private group(g: { gap: number; tools: Tool[] }, cls: string, size: number) {
    const last = cls === "vgroup" ? `margin-bottom:${g.gap}px` : `margin-right:${g.gap}px`;
    const base = cls === "vgroup" ? "tool" : "tb";
    return html`<div class=${cls} style=${last}>${g.tools.map(([label, body, mod]) =>
      html`<button class="${base} ${mod ?? ""}" aria-label=${label}>${icon(size, body)}</button>`)}</div>`;
  }

  private check(label: string, on: boolean, i: number | string) {
    return html`<div class="row"><label for="o${i}">${label}</label><input class="cb" type="checkbox" id="o${i}" ?checked=${on}></div>`;
  }

  private slider(label: string, value: string, pct: number, off = false) {
    const id = label.replace(/ /g, "");
    return html`<div class="row tall ${off ? "off" : ""}"><label for=${id}>${label}</label>
      <input class="num" id=${id} .value=${value} ?disabled=${off}>
      <input class="rng" type="range" min="0" max="100" .value=${String(pct)} aria-label="${label} slider" ?disabled=${off} style="--p:${pct}%"></div>`;
  }

  private arrow = html`<svg width="10" height="6" viewBox="0 0 10 6"><path fill="currentColor" d="M0 0H10L5 6Z"/></svg>`;

  private treeNode(name: string, glyph: Icon, last: boolean, picked: boolean) {
    return html`<div class=${classMap({ node: true, picked })}>
      <svg width="12" height="25" viewBox="0 0 12 25" stroke="#5a5a5a" fill="none"><path d=${last ? "M.5 0V13.500H12" : "M.5 0V25M.5 13.500H12"}/></svg>
      <svg width="20" height="20" viewBox="0 0 20 20" fill="none" stroke="#8bdafc" stroke-width="1.800">${glyph}</svg>
      <span class="nm">${name}</span>
      <svg width="48" height="25" viewBox="0 0 48 25"><rect x="0" y="6" width="13" height="13" rx="2" fill="#606060"/><path d="M3 16L10 9" stroke="#262626" stroke-width="2.500"/><g fill="#5e5e5e"><circle cx="24" cy="7.500" r="4"/><circle cx="24" cy="18.500" r="4"/></g>${last ? svg`<path d="M34 13L38.500 17L47.500 7.500" fill="none" stroke="#66e37f" stroke-width="2.500"/>` : nothing}</svg>
    </div>`;
  }

  render() {
    return html`<div class="app">
      <header class="title">
        <svg width="19" height="22" viewBox="0 0 19 22"><path fill="#2a2aa8" d="M9.500 1L18 5.500V16.500L9.500 21L1 16.500V5.500Z"/><circle cx="9.500" cy="11" r="6.500" fill="#2f6df0"/><path d="M6 7Q13 4 14 11Q13 16 9 16" fill="none" stroke="#1b2a86" stroke-width="2"/><circle cx="9.500" cy="10.500" r="2.500" fill="#5fa8ff"/></svg>
        <h1>Cinema 4D 2026.3.4 TRIAL - [Untitled 4 *] - Main</h1>
        <div class="winbtns">
          <button aria-label="Minimize"><svg width="12" height="12" viewBox="0 0 12 12"><path d="M0 5.500H12" stroke="#111"/></svg></button>
          <button aria-label="Restore"><svg width="13" height="13" viewBox="0 0 13 13" fill="none" stroke="#111" stroke-width="1.200"><rect x="1" y="3.500" width="9" height="9" rx="1.500"/><path d="M3.500 3.500V2.500Q3.500 1 5 1H10.500Q12.300 1 12.300 3V8Q12.300 9.500 10.500 9.500"/></svg></button>
          <button aria-label="Close"><svg width="13" height="13" viewBox="0 0 13 13" stroke="#111" stroke-width="1.200"><path d="M.5 .5L12.500 12.500M12.500 .5L.5 12.500"/></svg></button>
        </div>
      </header>

      <div class="docbar">
        <div class="history">
          <button aria-label="Undo">${icon(24, S.undo)}</button><button aria-label="Redo">${icon(24, S.redo)}</button>
          <button aria-label="Home"><svg class="icon" width="24" height="24" viewBox="-3 -3 30 30">${S.home}</svg></button>
        </div>
        <div class="doctab"><span>Untitled 4 *</span><button aria-label="Close tab"><svg class="icon" width="12" height="12" viewBox="0 0 12 12"><path d="M2 2L10 10M10 2L2 10"/></svg></button></div>
        <button class="plus" aria-label="New tab"><svg class="icon" width="14" height="14" viewBox="0 0 14 14"><path stroke-width="3" d="M7 0V14M0 7H14"/></svg></button>
        <nav class="spaces">
          ${["Standard", "Model", "Sculpt", "UVEdit", "Paint", "Groom", "Track", "Script", "Nodes"].map((w) =>
            html`<button class=${w === "Model" ? "sel" : ""}>${w}</button>`)}
          <button class="dots" aria-label="More layouts"><svg width="6" height="22" viewBox="0 0 6 22" fill="#999"><circle cx="3" cy="3.500" r="2.500"/><circle cx="3" cy="11" r="2.500"/><circle cx="3" cy="18.500" r="2.500"/></svg></button>
        </nav>
      </div>

      <nav class="menubar">
        ${["File", "Edit", "Create", "Modes", "Select", "Tools", "Spline", "Mesh", "Volume", "MoGraph", "Character", "Animate", "Simulate", "Tracker", "Render", "Redshift", "Extensions", "Window", "Help"].map((m) =>
          html`<button class=${["Create", "Mesh", "Simulate", "Window"].includes(m) ? "hot" : ""}>${m}</button>`)}
      </nav>

      <div class="main">
        <div class="work">
          <div class="toolbar">
            <span class="grip h"></span><span class="grip v"></span>
            ${topGroups.map((g) => this.group(g, "bgroup", 35))}
            <span class="fill"></span>
            ${topEnd.map((g) => this.group(g, "bgroup", 35))}
          </div>
          <div class="body">
            <div class="tools">${leftGroups.map((g) => this.group(g, "vgroup", 45))}</div>
            <div class="views">
              <scene-view kind="persp" active></scene-view>
              <scene-view kind="top"></scene-view>
              <scene-view kind="right"></scene-view>
              <scene-view kind="front"></scene-view>
            </div>
          </div>
        </div>

        <div class="create"><div class="grip"></div>${rightGroups.map((g) => this.group(g, "vgroup", 45))}</div>

        <aside class="side">
          <section class="panel">
            <div class="tabs"><button class="sel">Objects</button></div>
            <div class="pmenu">
              <button class="first" aria-label="Menu">${icon(24, S.menu)}</button>
              <button>File</button><button>Edit</button><button>View</button><button>Object</button><button class="hot">Tags</button>
              <button aria-label="More"><svg class="icon" width="8" height="12" viewBox="0 0 8 12"><path stroke-width="1.800" d="M1.500 2L6.500 6.500L1.500 11"/></svg></button>
              <div class="picons">
                <button aria-label="Search">${icon(24, S.search)}</button><button aria-label="Home">${icon(24, S.home)}</button>
                <button aria-label="Filter">${icon(24, S.filter)}</button><button aria-label="Pop out">${icon(24, S.popout)}</button>
              </div>
            </div>
            <div class="tree">
              ${this.treeNode("Polygon", svg`<path fill="#8bdafc" stroke="none" d="M10 5L15.500 16H4.500Z"/><g fill="#8bdafc" stroke="none"><circle cx="10" cy="4" r="1.900"/><circle cx="3.500" cy="16.500" r="1.900"/><circle cx="16.500" cy="16.500" r="1.900"/></g>`, false, true)}
              <div class="pickrow"><svg width="18" height="18" viewBox="0 0 18 18" fill="none" stroke="#8583e6" stroke-width="1.800"><path d="M1.500 17V1.500H17"/><path stroke-width="1.400" d="M2 11.500Q10.500 10.500 12 2M2 11.500L7 6.500"/></svg></div>
              ${this.treeNode("Spline", svg`<path d="M10 4Q3 5 4 8Q5 10 10 10.500Q17 11.500 16.500 14Q15 16.500 10 16.500"/><g fill="#8bdafc" stroke="none"><circle cx="10" cy="3.500" r="1.900"/><circle cx="10" cy="17" r="1.900"/></g>`, true, false)}
              <div></div><div class="node"></div><div></div>
            </div>
          </section>

          <section class="panel attr">
            <div class="tabs"><button class="sel">Attributes</button><button>Layers</button><button>Axis Center</button><button>Structure</button></div>
            <div class="pmenu">
              <button class="first" aria-label="Menu">${icon(24, S.menu)}</button>
              <button>Mode</button><button>User Data</button>
              <div class="picons">
                <button aria-label="Back">${icon(24, S.back)}</button><button class="faint" aria-label="Forward">${icon(24, S.fwd)}</button>
                <button class="faint" aria-label="Up">${icon(24, S.up)}</button><button aria-label="Search">${icon(24, S.search)}</button>
                <button aria-label="Filter">${icon(24, S.filter)}</button><button aria-label="Lock">${icon(24, S.lock)}</button>
                <button aria-label="Track">${icon(24, S.ring)}</button><button aria-label="Pop out">${icon(24, S.popout)}</button>
              </div>
            </div>
            <div class="toolname">
              <svg class="icon" width="22" height="22" viewBox="6 7 32 32">${I.polyPen}</svg><span>Polygon Pen</span>
              <div class="preset"><button>Default</button><button aria-label="Presets">${this.arrow}</button></div>
            </div>
            <div class="scroller">
              <div class="form">
                <h2>Options</h2>
                <div class="row mode"><span class="lab">Draw Mode</span>
                  <div class="seg">${["Points", "Edges", "Polygons"].map((m) =>
                    html`<button class=${m === this.drawMode ? "sel" : ""} @click=${() => (this.drawMode = m)}>${m}</button>`)}</div>
                </div>
                <div class="sect">${options1.map(([l, on], i) => this.check(l, on, i))}</div>
                <div class="sect tight">
                  ${this.check("Create Semi Circle", false, "semi")}
                  ${this.slider("Arc Direction Max Angle", "45 °", 23)}
                  ${this.slider("Arc Subdivision", "10", 18)}
                </div>
                <div class="sect tight">${this.slider("Polygon Brush Radius", "20 cm", 8, true)}</div>
                <div class="sect"><div class="row"><label for="tweak">Tweaking Mode</label><div class="combo wide"><select class="pick" id="tweak"><option>Full</option></select></div></div></div>
              </div>
              <div class="vbar"></div>
              <div class="hbar"></div>
            </div>
          </section>

          <section class="coords">
            <div class="chead">
              <button aria-label="Menu">${icon(24, S.menu)}</button>
              <button class="reset">Reset Transform</button>
              <div class="combo c1"><select class="pick" aria-label="Space"><option>Object (Rel)</option></select>${this.arrow}</div>
              <div class="combo c2"><select class="pick" aria-label="Size mode" disabled><option>Size</option></select>${this.arrow}</div>
            </div>
            <table class="ctable">${["X", "Y", "Z"].map((a) => html`<tr><th scope="row">${a}</th>${["0 cm", "0 °", "0 cm"].map((v, i) =>
              html`<td><input class="num" aria-label="${a} ${["position", "rotation", "size"][i]}" .value=${v}></td>`)}</tr>`)}</table>
          </section>
        </aside>
      </div>

      <footer class="status"><button aria-label="Menu">${icon(24, S.menu)}</button><button aria-label="Status">${icon(24, S.check)}</button></footer>
    </div>`;
  }
}
